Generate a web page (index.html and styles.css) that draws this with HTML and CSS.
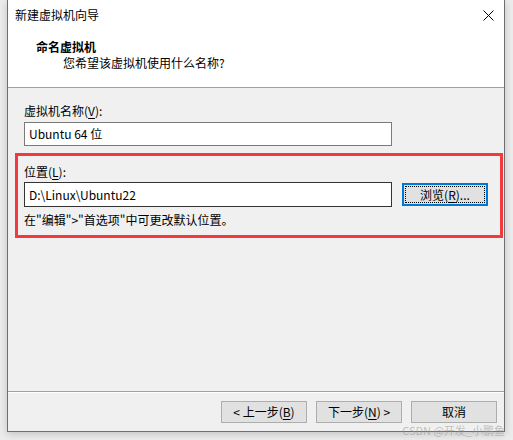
FILE: index.html
```html
<!DOCTYPE html>
<html lang="zh-CN">

<head>
  <meta charset="UTF-8">
  <title>新建虚拟机向导</title>
  <link rel="stylesheet" href="styles.css">
</head>

<body>
  <div class="window">
    <div class="titlebar">
      <span class="title">新建虚拟机向导</span>
      <svg class="close" width="11" height="11" viewBox="0 0 11 11">
        <path d="M0.5 0.5 L10.5 10.5 M10.5 0.5 L0.5 10.5" stroke="#000" stroke-width="1" fill="none" />
      </svg>
    </div>
    <div class="header">
      <h1>命名虚拟机</h1>
      <p>您希望该虚拟机使用什么名称?</p>
    </div>
    <div class="content">
      <label class="field-label">虚拟机名称(<u>V</u>):</label>
      <div class="textbox">Ubuntu 64 位</div>

      <div class="highlight">
        <label class="field-label">位置(<u>L</u>):</label>
        <div class="row">
          <div class="textbox textbox-dark">D:\Linux\Ubuntu22</div>
          <button class="btn btn-focus"><span>浏览(<u>R</u>)...</span></button>
        </div>
        <p class="hint">在"编辑"&gt;"首选项"中可更改默认位置。</p>
      </div>
    </div>
    <div class="footer">
      <button class="btn">&lt; 上一步(<u>B</u>)</button>
      <button class="btn">下一步(<u>N</u>) &gt;</button>
      <button class="btn">取消</button>
    </div>
  </div>
  <div class="watermark">CSDN @开发_小鹏鱼</div>
</body>

</html>
```

FILE: styles.css
```css
* {
  margin: 0;
  padding: 0;
  box-sizing: border-box;
  font-family: "Microsoft YaHei UI", "Noto Sans CJK SC", "Noto Sans", sans-serif;
}

html,
body {
  height: 100%;
  width: 100%;
}

body {
  background: #ececec;
  position: relative;
  overflow: hidden;
  font-size: 12px;
  color: #000;
}

.window {
  margin-left: 7px;
  width: 498px;
  height: 432px;
  background: #f0f0f0;
  border: 1px solid #6e6e6e;
  border-top: none;
  box-shadow: 0 2px 8px rgba(0, 0, 0, 0.18);
  display: flex;
  flex-direction: column;
}

.titlebar {
  height: 30px;
  background: #fff;
  display: flex;
  align-items: center;
  justify-content: space-between;
  padding: 0 10px 0 7px;
}

.title {
  font-size: 12px;
  line-height: 16px;
}

.header {
  height: 58px;
  background: #fff;
  border-bottom: 1px solid #a0a0a0;
  padding-top: 9px;
}

.header h1 {
  font-size: 12px;
  font-weight: 700;
  line-height: 16px;
  margin-left: 28px;
}

.header p {
  line-height: 16px;
  margin-left: 55px;
}

.content {
  flex: 1;
  padding: 15px 0 0 7px;
  border-bottom: 1px solid #a0a0a0;
  box-shadow: 0 1px 0 #fff;
}

.field-label {
  display: block;
  line-height: 16px;
  margin-left: 9px;
}

u {
  text-decoration: underline;
  text-underline-offset: 2px;
}

.textbox {
  width: 368px;
  height: 24px;
  margin: 3px 0 0 9px;
  background: #fff;
  border: 1px solid #7a7a7a;
  line-height: 22px;
  padding-left: 4px;
}

.textbox-dark {
  border-color: #333;
  height: 25px;
  line-height: 23px;
}

.highlight {
  margin-top: 7px;
  width: 488px;
  border: 3px solid #f23a3e;
  padding: 8px 0 7px 0;
}

.highlight .field-label {
  margin-left: 6px;
}

.highlight .textbox {
  margin-left: 6px;
  margin-top: 2px;
}

.row {
  display: flex;
  align-items: flex-start;
  gap: 10px;
}

.btn {
  width: 86px;
  height: 22px;
  background: #e1e1e1;
  border: 1px solid #adadad;
  font-size: 12px;
  line-height: 18px;
  color: #000;
}

.btn-focus {
  margin-top: 3px;
  height: 23px;
  border: 2px solid #0078d7;
  padding: 1px;
}

.btn-focus span {
  display: block;
  height: 100%;
  border: 1px dotted #000;
  line-height: 15px;
}

.hint {
  margin: 5px 0 0 6px;
  line-height: 16px;
}

.footer {
  height: 38px;
  display: flex;
  justify-content: flex-end;
  gap: 9px;
  padding: 8px 7px 0 0;
  margin-top: 1px;
}

.watermark {
  position: absolute;
  right: 8px;
  bottom: 2px;
  font-size: 11px;
  color: rgba(150, 150, 150, 0.55);
}
```
